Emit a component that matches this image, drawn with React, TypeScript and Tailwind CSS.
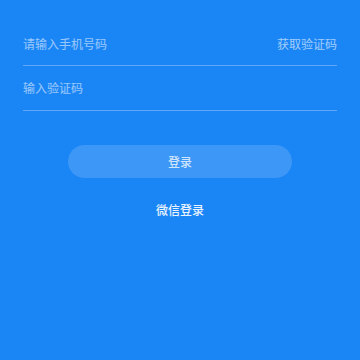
export default function App() {
  return (
    <div
      className="w-[360px] h-[360px] bg-[#1a85f5] overflow-hidden"
      style={{ fontFamily: '"Noto Sans CJK SC", "Noto Sans", sans-serif' }}
    >
      <div className="px-[23px] pt-[22px]">
        {/* Phone row */}
        <div className="h-[44px] flex items-center justify-between border-b border-white/30">
          <span className="text-[12px] text-white/55">请输入手机号码</span>
          <span className="text-[12px] text-white/60">获取验证码</span>
        </div>
        {/* Code row */}
        <div className="h-[45px] flex items-center border-b border-white/30">
          <span className="text-[12px] text-white/55">输入验证码</span>
        </div>
      </div>

      {/* Login button */}
      <div className="flex justify-center mt-[34px]">
        <button className="w-[224px] h-[33px] rounded-full bg-white/15 text-[12px] text-white/75 font-medium">
          登录
        </button>
      </div>

      <div className="flex justify-center mt-[23px]">
        <span className="text-[12px] leading-[18px] text-white/90 font-medium">微信登录</span>
      </div>
    </div>
  );
}
